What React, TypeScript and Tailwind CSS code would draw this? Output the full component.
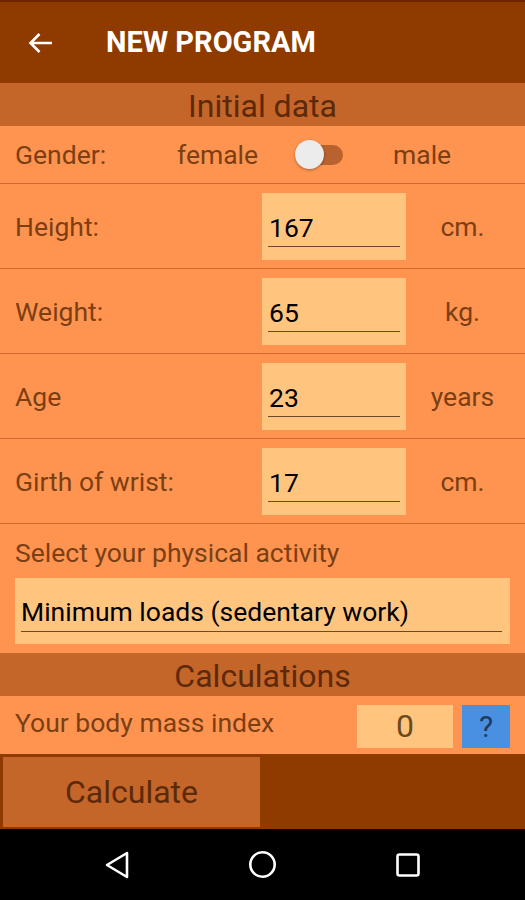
const FONT = { fontFamily: 'Roboto, "Noto Sans", sans-serif' };

const ROWS = [
  { label: 'Height:', value: '167', unit: 'cm.' },
  { label: 'Weight:', value: '65', unit: 'kg.' },
  { label: 'Age', value: '23', unit: 'years' },
  { label: 'Girth of wrist:', value: '17', unit: 'cm.' },
];

function Band({ title }: { title: string }) {
  return (
    <div className="h-[43px] bg-[#c4652a] flex items-center justify-center pt-[2px] text-[32px] leading-none text-[#5c2a08]">
      {title}
    </div>
  );
}

export default function App() {
  return (
    <div className="w-[525px] h-[900px] flex flex-col bg-[#ff9450] overflow-hidden" style={FONT}>
      {/* Toolbar */}
      <header className="h-[83px] bg-[#8f3b00] border-t-2 border-[#6e2400] flex items-center">
        <svg className="ml-[28px]" width="24" height="20" viewBox="0 0 24 20" fill="none" stroke="white" strokeWidth="2.6">
          <path d="M24 10 H2.5 M11.5 1 L2.5 10 L11.5 19" />
        </svg>
        <h1 className="ml-[54px] text-white font-bold text-[29px] leading-none">NEW PROGRAM</h1>
      </header>

      <Band title="Initial data" />

      {/* Gender */}
      <div className="h-[58px] border-b border-[#d06a2c] flex items-center text-[26.5px] text-[#7b3f14]">
        <span className="pl-[15px] w-[177px]">Gender:</span>
        <span className="w-[118px]">female</span>
        <div className="relative w-[48px] h-[29px] flex items-center">
          <div className="ml-[8px] w-[40px] h-[20px] rounded-full bg-[#b9622f]" />
          <div className="absolute left-0 top-0 w-[29px] h-[29px] rounded-full bg-[#ececec] shadow-[0_1px_3px_rgba(0,0,0,0.35)]" />
        </div>
        <span className="ml-[50px]">male</span>
      </div>

      {/* Measurements */}
      {ROWS.map((r) => (
        <div key={r.label} className="h-[85px] border-b border-[#d06a2c] flex items-center text-[26.5px] text-[#7b3f14]">
          <span className="pl-[15px] flex-1 mt-[2px]">{r.label}</span>
          <div className="w-[144px] h-[67px] bg-[#ffc57f] px-[6px] pt-[17px]">
            <div className="border-b border-[#6b4a2a] text-black text-[26.5px] leading-[36px] pl-px">{r.value}</div>
          </div>
          <span className="w-[119px] pr-[6px] text-center mt-[2px]">{r.unit}</span>
        </div>
      ))}

      {/* Activity */}
      <div className="h-[129px] px-[15px] pt-[14px]">
        <div className="text-[26.5px] text-[#7b3f14] leading-[30px]">Select your physical activity</div>
        <div className="mt-[10px] h-[66px] bg-[#ffc57f] pl-[6px] pr-[8px] pt-[15px]">
          <div className="border-b border-[#6b4a2a] text-black text-[26.5px] leading-[38px]">
            Minimum loads (sedentary work)
          </div>
        </div>
      </div>

      <Band title="Calculations" />

      {/* BMI */}
      <div className="h-[58px] flex items-center text-[26.5px] text-[#7b3f14]">
        <span className="pl-[15px] flex-1 -mt-[4px]">Your body mass index</span>
        <div className="w-[96px] h-[43px] bg-[#ffc57f] flex items-center justify-center text-[32px] text-[#6b4a1c] mt-[2px]">
          0
        </div>
        <div className="ml-[9px] mr-[15px] w-[48px] h-[43px] bg-[#4a90e2] flex items-center justify-center text-[30px] text-[#233a5c] mt-[2px]">
          ?
        </div>
      </div>

      {/* Footer */}
      <div className="h-[75px] bg-[#8f3b00] flex items-center pl-[3px]">
        <button className="w-[257px] h-[70px] bg-[#c4652a] text-[32px] text-[#5c2a08]">Calculate</button>
      </div>

      {/* Android nav */}
      <nav className="flex-1 bg-black flex items-center justify-center gap-[119px]">
        <svg width="24" height="28" viewBox="0 0 24 28" fill="none" stroke="white" strokeWidth="2.6" strokeLinejoin="round">
          <path d="M22 2 L2 14 L22 26 Z" />
        </svg>
        <svg width="29" height="29" viewBox="0 0 29 29" fill="none" stroke="white" strokeWidth="2.6">
          <circle cx="14.5" cy="14.5" r="12.2" />
        </svg>
        <svg width="24" height="24" viewBox="0 0 24 24" fill="none" stroke="white" strokeWidth="2.6">
          <rect x="1.5" y="1.5" width="21" height="21" rx="2" />
        </svg>
      </nav>
    </div>
  );
}
